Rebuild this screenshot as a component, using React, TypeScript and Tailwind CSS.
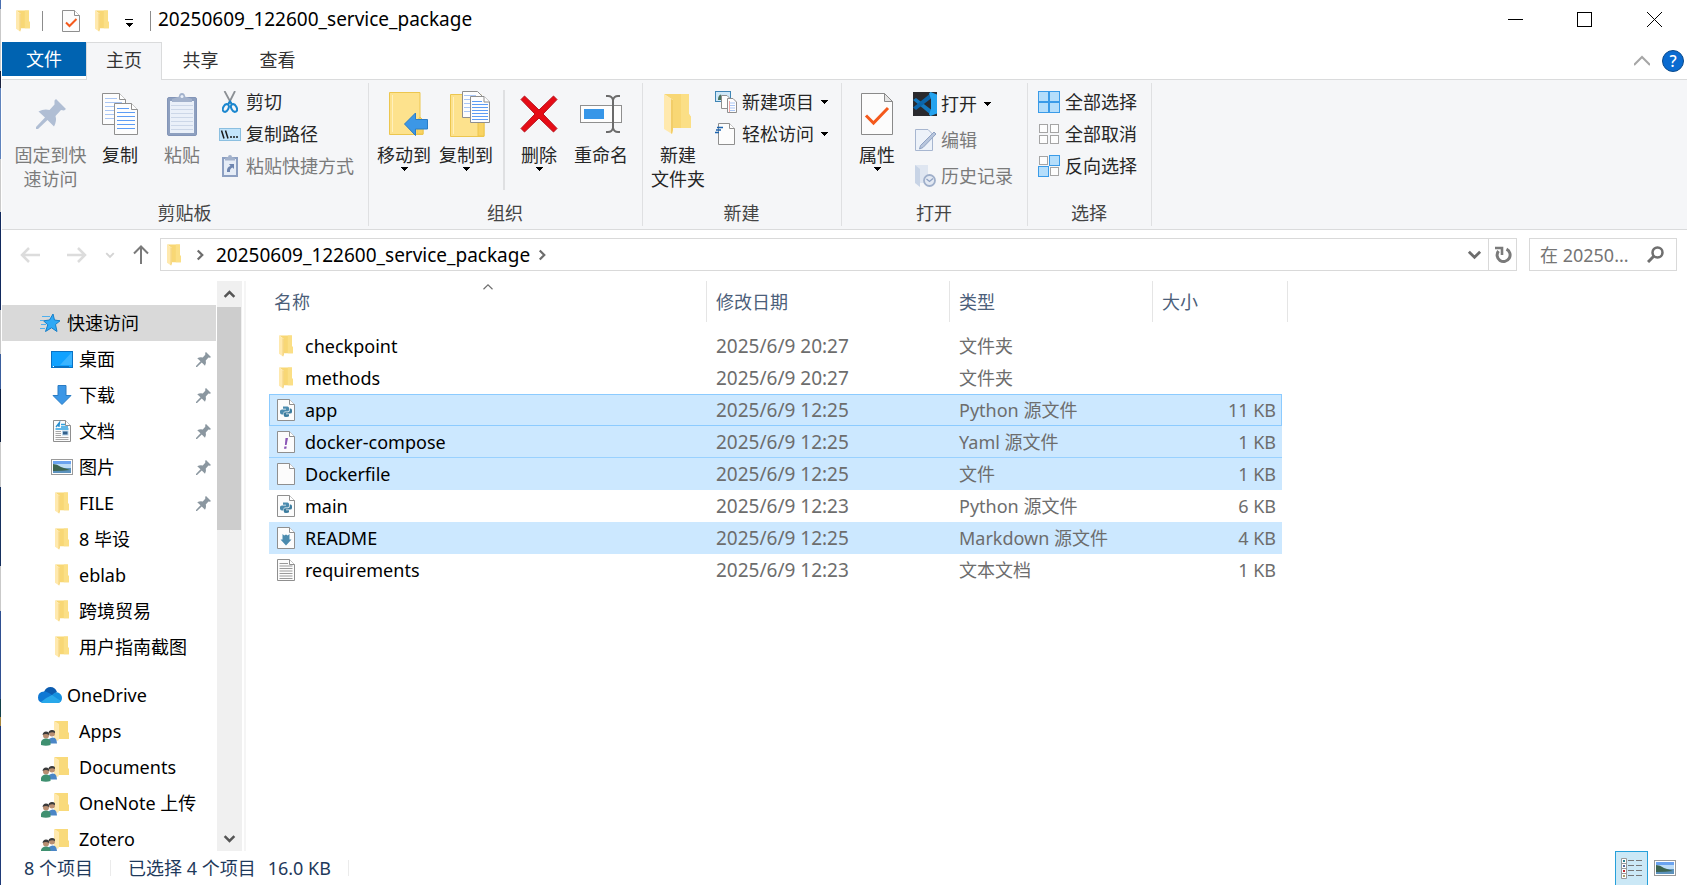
import { useState } from "react";
import type { ReactNode } from "react";

/* ---------- icons ---------- */

function Folder({ className = "h-[22px] w-[15px]" }: { className?: string }) {
  return (
    <svg viewBox="0 0 29 42" className={className} preserveAspectRatio="none" aria-hidden="true">
      <path d="M0 1H25V21L27 24V35H9V7Z" fill="#f8d775" />
      <path d="M17 1H25V21L27 24V35H17Z" fill="#fbdf86" />
      <path d="M0 1L9 7V37L8 41L0 36Z" fill="#ffe9ae" />
      <path d="M7 6L9 7V37L8 41L7 40Z" fill="#f2cd68" />
    </svg>
  );
}

function Page({ children }: { children?: ReactNode }) {
  return (
    <svg viewBox="0 0 18 22" className="h-[22px] w-[18px] shrink-0" aria-hidden="true">
      <path d="M.5 .5H12.500L17.500 5.500V21.500H.5Z" fill="#fcfcfc" stroke="#8f8f8f" />
      <path d="M12.500 .5V5.500H17.500" fill="#fff" stroke="#8f8f8f" />
      {children}
    </svg>
  );
}

function PythonIcon() {
  return (
    <Page>
      <path d="M6 7.500H10.500Q12 7.500 12 9V11Q12 12.500 10.500 12.500H8Q6.500 12.500 6.500 14V15.500H5Q3 15.500 3 13.500V12Q3 10.500 5 10.500H9V9.800H6Z" fill="#4b8bae" />
      <path d="M12.700 9.500H13.500Q15 9.500 15 11.500V13Q15 14.500 13 14.500H9V15.200H12V17Q12 18 9 18Q6.800 18 6.800 16.500V14.500Q6.800 13.200 8.300 13.200H11Q12.700 13.200 12.700 11.500Z" fill="#3c7c9e" />
    </Page>
  );
}

function YamlIcon() {
  return (
    <Page>
      <path d="M8.500 7H11L9.600 14H7.900Z" fill="#8a55b5" />
      <path d="M7.400 15.500H9.700L9.300 17.800H7Z" fill="#8a55b5" />
    </Page>
  );
}

function MarkdownIcon() {
  return (
    <Page>
      <path d="M5.500 7L7.200 8.500L9 7.500L10.800 8.500L12.500 7V12.500H14.500L9 18.500L3.500 12.500H5.500Z" fill="#4b8bae" />
    </Page>
  );
}

function TextIcon() {
  return (
    <Page>
      <path d="M2.500 4.500H11M2.500 7H15.500M2.500 9.500H15.500M2.500 12H15.500M2.500 14.500H15.500M2.500 17H15.500M2.500 19.500H15.500" stroke="#9a9a9a" />
    </Page>
  );
}

function DocIcon() {
  return (
    <Page>
      <path d="M3 7L6.500 2.500L6 7M4 5.500H6.500" fill="none" stroke="#2a8fd0" strokeWidth="1.300" />
      <path d="M8 4.500H12M8 7H15M2.500 9H15.500" stroke="#2ea0e0" strokeWidth="1.300" />
      <path d="M2.500 11.500H8M2.500 13.500H8M2.500 15.500H8M2.500 17.500H15.500M2.500 19.500H15.500" stroke="#a8a8a8" />
      <rect x="9.500" y="11" width="5.500" height="4" fill="#33618c" stroke="#b5d3ea" />
    </Page>
  );
}

function Picture() {
  return (
    <svg viewBox="0 0 22 16" className="h-4 w-[22px]" aria-hidden="true">
      <rect x=".5" y=".5" width="21" height="15" fill="#fff" stroke="#9a9a9a" />
      <rect x="2" y="2" width="18" height="4" fill="#6ba3f0" />
      <rect x="2" y="5" width="18" height="4" fill="#bcdcf7" />
      <rect x="2" y="9" width="18" height="5" fill="#5c92bd" />
      <path d="M2 5Q6 5 10 8L19 11Q12 12 2 12Z" fill="#3d6450" />
    </svg>
  );
}

function Desktop() {
  return (
    <svg viewBox="0 0 22 17" className="h-[17px] w-[22px]" aria-hidden="true">
      <rect x=".5" y=".5" width="21" height="16" fill="#11a2ff" stroke="#0a72c4" />
      <path d="M21 1V14H9Z" fill="#3bb4ff" />
      <path d="M2 15.500H19" stroke="#fff" strokeDasharray="1 2" />
      <path d="M3 15.500H18" stroke="#0a72c4" />
    </svg>
  );
}

function Download() {
  return (
    <svg viewBox="0 0 20 20" className="h-5 w-5" aria-hidden="true">
      <path d="M6 .5H14V10.500H19L10 19.500L1 10.500H6Z" fill="#3c97e6" stroke="#2a7cc4" />
    </svg>
  );
}

function Star() {
  return (
    <svg viewBox="0 0 22 20" className="h-5 w-[22px]" aria-hidden="true">
      <path d="M14 1L15.500 7L21 7.800L16.500 11.500L18 18.500L12.500 14.800L6.500 18.500L8.800 11.800L4.500 7.800L10.500 7Z" fill="#2fa9f5" stroke="#167fc9" />
      <path d="M3 3.500H11M1 7.500H4M2 11.500H7M1 15.500H6" stroke="#4fb0ee" />
    </svg>
  );
}

function Cloud() {
  return (
    <svg viewBox="0 0 24 16" className="h-4 w-6" aria-hidden="true">
      <path d="M6 5Q8 0 12.500 0Q17 0 19 5L12 10Z" fill="#0b5cb0" />
      <path d="M5 16Q0 15 0 10.500Q0 5 6 4.500Q9 4 14 8L9 16Z" fill="#0f78d4" />
      <path d="M14 8Q17 4.500 20 5.500Q24 7 24 11Q24 16 19 16H12Z" fill="#1590df" />
      <path d="M3 15Q7 11 14 8Q18 11 23 14Q21.500 16 19 16H5Q4 16 3 15Z" fill="#28a8ea" />
    </svg>
  );
}

function SharedFolder() {
  return (
    <svg viewBox="0 0 28 25" className="h-[25px] w-7" aria-hidden="true">
      <path d="M13 0H27V11L28 12V18H17V3Z" fill="#f9da7b" />
      <path d="M13 0L18 3V18L17 20L13 18Z" fill="#ffe9ae" />
      <circle cx="11" cy="12.500" r="3" fill="#b98f72" />
      <path d="M7.500 11.500Q8 9 11 9Q14.500 9 14 12Q11 10.500 7.500 12.500Z" fill="#3a3a3a" />
      <path d="M8 22.500V18Q11 15.500 14 17Q16 18.500 16 22.500Z" fill="#4b86c6" />
      <circle cx="5" cy="14.500" r="3" fill="#b98f72" />
      <path d="M1.500 14Q2 10.500 5 10.500Q8.500 10.500 8 14Q5 12 1.500 14Z" fill="#3a3a3a" />
      <path d="M0 24V21Q1 17.500 5 17.500Q9.500 17.500 9.500 21V24Q5 25.500 0 24Z" fill="#3f9070" />
    </svg>
  );
}

function Pin({ className, color }: { className: string; color: string }) {
  return (
    <svg viewBox="0 0 30 30" className={className} aria-hidden="true">
      <path d="M20 0L30 10L28 11.500L25 11L19.500 17Q21 22 18 27.500L11.500 21L2 30H0V28L9 18.500L2.500 12.500Q8 9.500 13.500 11L18.500 5.500L18.500 1.500Z" fill={color} />
    </svg>
  );
}

function Caret() {
  return (
    <svg viewBox="0 0 8 4" className="h-1 w-2 shrink-0" shapeRendering="crispEdges" aria-hidden="true">
      <path d="M0 0H8L4 4Z" fill="#000" />
    </svg>
  );
}

function CopyIcon() {
  return (
    <svg viewBox="0 0 36 42" className="h-[42px] w-9" aria-hidden="true">
      <path d="M.5 .5H17.500L23.500 6.500V31.500H.5Z" fill="#fdfdfd" stroke="#8f8f8f" />
      <path d="M17.500 .5V6.500H23.500" fill="#fff" stroke="#8f8f8f" />
      <path d="M3 5.500H15M3 9.500H20M3 13.500H20M3 17.500H20M3 21.500H20M3 25.500H20" stroke="#a9c6f5" />
      <path d="M12.500 10.500H29.500L35.500 16.500V41.500H12.500Z" fill="#fdfdfd" stroke="#8f8f8f" />
      <path d="M29.500 10.500V16.500H35.500" fill="#fff" stroke="#8f8f8f" />
      <path d="M15 15.500H27M15 19.500H33M15 23.500H33M15 27.500H33M15 31.500H33M15 35.500H33" stroke="#5c9cf5" />
    </svg>
  );
}

function PasteIcon() {
  return (
    <svg viewBox="0 0 30 43" className="h-[43px] w-[30px]" aria-hidden="true">
      <rect x=".5" y="4.500" width="29" height="38" rx="1.500" fill="#8ea0c0" stroke="#8395b8" />
      <rect x="3" y="8" width="24" height="32" fill="#eaf0f9" />
      <path d="M4 12.500H26M4 16.500H26M4 20.500H26M4 24.500H26M4 28.500H26M4 32.500H26M4 36.500H26" stroke="#ccd7e8" />
      <path d="M5 9V6L12 3.500Q12 0 15 0Q18 0 18 3.500L25 6V9Z" fill="#a3b2cc" />
      <circle cx="15" cy="3.500" r="1.500" fill="#eaf0f9" />
    </svg>
  );
}

function BigFolderBack() {
  return (
    <>
      <path d="M.5 .5H31V25L34 28V42.500H.5Z" fill="#fde28d" stroke="#ecc64f" />
      <path d="M28 42V29L31 25L34 28V42Z" fill="#f9d363" stroke="#ecc64f" />
      <path d="M3.500 3V40" stroke="#fff0bd" />
    </>
  );
}

function MoveToIcon() {
  return (
    <svg viewBox="-8 0 47 44" className="h-11 w-[47px]" aria-hidden="true">
      <BigFolderBack />
      <path d="M15.500 32L26.500 21V27.500H38.500V37H26.500V43.500Z" fill="#3c97e6" stroke="#2a7cc4" />
    </svg>
  );
}

function CopyToIcon() {
  return (
    <svg viewBox="-8 0 48 46" className="h-[46px] w-12" aria-hidden="true">
      <g transform="translate(0 3)">
        <BigFolderBack />
      </g>
      <path d="M12.500 .5H27.500L32 5V26.500H12.500Z" fill="#fdfdfd" stroke="#8f8f8f" />
      <path d="M14 4.500H26M14 8.500H29M14 12.500H29M14 16.500H29M14 20.500H29" stroke="#a9c6f5" />
      <path d="M20.500 5.500H34L39.500 11V31.500H20.500Z" fill="#fdfdfd" stroke="#8f8f8f" />
      <path d="M34 5.500V11H39.500" fill="#fff" stroke="#8f8f8f" />
      <path d="M22 10.500H32M22 13.500H38M22 16.500H38M22 19.500H38M22 22.500H38M22 25.500H38M22 28.500H38" stroke="#5c9cf5" />
    </svg>
  );
}

function DeleteIcon() {
  return (
    <svg viewBox="0 0 38 38" className="h-[38px] w-[38px]" aria-hidden="true">
      <path d="M4.500 1L19 15L33.500 1L37 4.500L23 19L37 33.500L33.500 37L19 23L4.500 37L1 33.500L15 19L1 4.500Z" fill="#e60c16" stroke="#b8111c" />
    </svg>
  );
}

function RenameIcon() {
  return (
    <svg viewBox="0 0 42 38" className="h-[38px] w-[42px]" aria-hidden="true">
      <rect x=".5" y="10.500" width="41" height="17" fill="#fdfdfd" stroke="#8f8f8f" />
      <rect x="4" y="14" width="20" height="10" fill="#3796e8" />
      <path d="M33 4V34M26 1H28Q32 1 33 5Q34 1 38 1H40M26 37H28Q32 37 33 33Q34 37 38 37H40" fill="none" stroke="#6b6b6b" strokeWidth="2" />
    </svg>
  );
}

function PropertiesIcon() {
  return (
    <svg viewBox="0 0 32 42" className="h-[42px] w-8" aria-hidden="true">
      <path d="M.5 .5H23.500L31.500 8.500V41.500H.5Z" fill="#fcfcfc" stroke="#8a8a8a" />
      <path d="M23.500 .5V8.500H31.500Z" fill="#e4e4e4" stroke="#8a8a8a" />
      <path d="M5 22.500L12.500 30L27 15" fill="none" stroke="#f4591c" strokeWidth="3" />
    </svg>
  );
}

function ScissorsIcon() {
  return (
    <svg viewBox="0 0 16 22" className="h-[22px] w-4" aria-hidden="true">
      <path d="M2.500 0L9.500 13M13 0L6.500 13" stroke="#8b8f94" strokeWidth="1.800" />
      <ellipse cx="3.800" cy="17" rx="2.600" ry="4" transform="rotate(28 3.800 17)" fill="none" stroke="#1b87cf" strokeWidth="2" />
      <ellipse cx="12" cy="17" rx="2.600" ry="4" transform="rotate(-28 12 17)" fill="none" stroke="#1b87cf" strokeWidth="2" />
      <path d="M5.500 14L8 10.500L10.500 14" fill="none" stroke="#1b87cf" strokeWidth="2" />
    </svg>
  );
}

function PathIcon() {
  return (
    <svg viewBox="0 0 22 13" className="h-[13px] w-[22px]" aria-hidden="true">
      <rect x=".5" y=".5" width="21" height="12" fill="#c3e4fa" stroke="#8bbfe0" />
      <path d="M2.500 2.500L5 10.500M6.500 2.500L9 10.500" stroke="#1c1c1c" strokeWidth="1.500" />
      <path d="M11 9H13M14 9H16M17 9H19" stroke="#1c1c1c" strokeWidth="1.600" />
    </svg>
  );
}

function PasteLinkIcon() {
  return (
    <svg viewBox="0 0 16 22" className="h-[22px] w-4" aria-hidden="true">
      <rect x="1" y="3" width="14" height="18" fill="#e6edf7" stroke="#8da0c2" strokeWidth="2" />
      <path d="M3 5.500V3L6 2Q6 0 8 0Q10 0 10 2L13 3V5.500Z" fill="#a3b2cc" />
      <path d="M5 17Q4.500 12 8.500 11L7 9H12V14L10.500 12.500Q7.500 13.500 8 17Z" fill="#6f86b0" />
    </svg>
  );
}

function NewItemIcon() {
  return (
    <svg viewBox="0 0 22 22" className="h-[22px] w-[22px]" aria-hidden="true">
      <rect x=".5" y=".5" width="15" height="10" fill="#cfe8f8" stroke="#3f85b5" />
      <path d="M3 9Q3 4 6 3.500Q7 6 6 9Z" fill="#48745f" />
      <path d="M6.500 4.500H12L15.500 8V17.500H6.500Z" fill="#fdfdfd" stroke="#8f8f8f" />
      <path d="M12.500 7.500H18L21.500 11V21.500H12.500Z" fill="#fdfdfd" stroke="#8f8f8f" />
      <path d="M14 12H20M14 14.500H20M14 17H20M14 19.500H20" stroke="#a9c6f5" />
      <path d="M14.500 10V21" stroke="#f0a6a6" />
    </svg>
  );
}

function EasyAccessIcon() {
  return (
    <svg viewBox="0 0 22 22" className="h-[22px] w-[22px]" aria-hidden="true">
      <path d="M3.500 .5H14.500L19.500 5.500V21.500H3.500Z" fill="#fcfcfc" stroke="#8f8f8f" />
      <path d="M14.500 .5V5.500H19.500" fill="#fff" stroke="#8f8f8f" />
      <path d="M2 4.500H8M1 7H6M0 9.500H4" stroke="#1c63ad" strokeWidth="1.300" />
    </svg>
  );
}

function VsCodeIcon() {
  return (
    <svg viewBox="0 0 24 24" className="h-6 w-6 shrink-0" aria-hidden="true">
      <rect width="24" height="24" fill="#2a2a2e" />
      <path d="M0 8L3 6L18 17.500V23Z" fill="#1379c0" />
      <path d="M0 15.500L3 18L18 6.500V1Z" fill="#0b66ac" />
      <path d="M17.500 0L24 2.500V21.500L17.500 24L16 22.500L18 17V7L16 1.500Z" fill="#25a3ee" />
    </svg>
  );
}

function EditIcon() {
  return (
    <svg viewBox="0 0 21 22" className="h-[22px] w-[21px]" aria-hidden="true">
      <path d="M.5 .5H13L17.500 5V21.500H.5Z" fill="#edf2f9" stroke="#a7b6d0" />
      <path d="M19 3L21 5L8 18.500L4.500 20L5.500 16.500Z" fill="#b7c5dc" stroke="#8fa2c3" />
    </svg>
  );
}

function HistoryIcon() {
  return (
    <svg viewBox="0 0 21 22" className="h-[22px] w-[21px]" aria-hidden="true">
      <path d="M0 0H13V18H4Z" fill="#dfe6f1" />
      <path d="M0 0L5 4V22L0 18Z" fill="#c8d4e6" />
      <circle cx="14.500" cy="15.500" r="5.500" fill="#e3e9f3" stroke="#9fafca" strokeWidth="1.800" />
      <path d="M11.500 14L14.500 16.500L18 13.500" fill="none" stroke="#8fa2c3" strokeWidth="1.300" />
    </svg>
  );
}

const squares = [
  [0, 0],
  [11, 0],
  [0, 11],
  [11, 11],
];

function SelectIcon({ on }: { on: boolean[] }) {
  return (
    <svg viewBox="0 0 22 22" className="h-[22px] w-[22px]" aria-hidden="true">
      {squares.map(([x, y], i) =>
        on[i] ? (
          <rect key={i} x={x + 0.5} y={y + 0.5} width="10" height="10" fill="#b5defb" stroke="#3a9be8" />
        ) : (
          <rect key={i} x={x + 1.5} y={y + 1.5} width="8" height="8" fill="#fdfdfd" stroke="#a5a5a5" />
        )
      )}
    </svg>
  );
}

function Chevron({ d, className, color = "#6d6d6d", width = 3 }: { d: string; className: string; color?: string; width?: number }) {
  return (
    <svg viewBox="0 0 16 16" className={className} aria-hidden="true">
      <path d={d} fill="none" stroke={color} strokeWidth={width} />
    </svg>
  );
}

const chevronUp = "M2 11L8 5L14 11";
const chevronDown = "M2 5L8 11L14 5";
const chevronRight = "M5 2L11 8L5 14";

/* ---------- ribbon ---------- */

function Group({ title, children }: { title: string; children: ReactNode }) {
  return (
    <section className="my-[3px] flex flex-col justify-between border-r border-[#dfe0e2] pr-px">
      <div className="flex items-start pt-[3px]">{children}</div>
      <h2 className="pb-px text-center text-[#444]">{title}</h2>
    </section>
  );
}

function BigButton({ icon, lines, menu, disabled, wide }: { icon: ReactNode; lines: string[]; menu?: boolean; disabled?: boolean; wide?: boolean }) {
  return (
    <button
      type="button"
      disabled={disabled}
      className={`flex flex-col items-center pt-1.5 disabled:text-[#7b7b7b] ${wide ? "w-[77px]" : "w-[62px]"}`}
    >
      <span className="mb-[7px] flex h-11 items-center">{icon}</span>
      {lines.map((line) => (
        <span key={line} className="whitespace-nowrap">
          {line}
        </span>
      ))}
      {menu && <Caret />}
    </button>
  );
}

function SmallButton({ icon, label, menu, disabled, tall }: { icon: ReactNode; label: string; menu?: boolean; disabled?: boolean; tall?: boolean }) {
  return (
    <button
      type="button"
      disabled={disabled}
      className={`flex items-center whitespace-nowrap disabled:text-[#7b7b7b] ${tall ? "h-9" : "h-8"}`}
    >
      <span className="mr-[5px] flex w-[22px] justify-center">{icon}</span>
      <span className="mr-1.5">{label}</span>
      {menu && <Caret />}
    </button>
  );
}

function Ribbon() {
  return (
    <div className="flex h-[150px] shrink-0 border-b border-[#dadbdc] bg-[#f5f6f8] text-[#262626]">
      <Group title="剪贴板">
        <div className="flex pl-2.5">
          <BigButton icon={<Pin className="h-[30px] w-[30px]" color="#b0bed4" />} lines={["固定到快", "速访问"]} disabled wide />
          <BigButton icon={<CopyIcon />} lines={["复制"]} />
          <BigButton icon={<PasteIcon />} lines={["粘贴"]} disabled />
        </div>
        <div className="flex flex-col pr-[7px] pl-1.5">
          <SmallButton icon={<ScissorsIcon />} label="剪切" />
          <SmallButton icon={<PathIcon />} label="复制路径" />
          <SmallButton icon={<PasteLinkIcon />} label="粘贴快捷方式" disabled />
        </div>
      </Group>
      <Group title="组织">
        <div className="flex pr-[9px] pl-1">
          <BigButton icon={<MoveToIcon />} lines={["移动到"]} menu />
          <BigButton icon={<CopyToIcon />} lines={["复制到"]} menu />
          <div className="mt-1 mr-[3px] ml-1.5 h-[100px] w-0.5 bg-[#dfe0e2]" />
          <BigButton icon={<DeleteIcon />} lines={["删除"]} menu />
          <BigButton icon={<RenameIcon />} lines={["重命名"]} />
        </div>
      </Group>
      <Group title="新建">
        <div className="flex pl-1">
          <BigButton icon={<Folder className="h-[42px] w-[29px]" />} lines={["新建", "文件夹"]} />
        </div>
        <div className="flex flex-col pr-3 pl-1.5">
          <SmallButton icon={<NewItemIcon />} label="新建项目" menu />
          <SmallButton icon={<EasyAccessIcon />} label="轻松访问" menu />
        </div>
      </Group>
      <Group title="打开">
        <div className="flex pl-1">
          <BigButton icon={<PropertiesIcon />} lines={["属性"]} menu />
        </div>
        <div className="flex flex-col pr-[7px] pl-1.5">
          <SmallButton icon={<VsCodeIcon />} label="打开" menu tall />
          <SmallButton icon={<EditIcon />} label="编辑" disabled tall />
          <SmallButton icon={<HistoryIcon />} label="历史记录" disabled tall />
        </div>
      </Group>
      <Group title="选择">
        <div className="flex flex-col pr-[7px] pl-2.5">
          <SmallButton icon={<SelectIcon on={[true, true, true, true]} />} label="全部选择" />
          <SmallButton icon={<SelectIcon on={[false, false, false, false]} />} label="全部取消" />
          <SmallButton icon={<SelectIcon on={[false, true, true, false]} />} label="反向选择" />
        </div>
      </Group>
    </div>
  );
}

/* ---------- window chrome ---------- */

function TitleBar() {
  return (
    <header className="flex h-[42px] shrink-0 items-center justify-between">
      <div className="flex h-full items-center pl-3.5">
        <Folder />
        <span className="ml-[11px] h-5 w-px bg-[#8c8c8c]" />
        <button type="button" aria-label="属性" className="ml-[19px]">
          <Page>
            <path d="M4 12.500L7.500 16L14.500 9" fill="none" stroke="#f4591c" strokeWidth="2" />
          </Page>
        </button>
        <button type="button" aria-label="新建文件夹" className="ml-[15px]">
          <Folder />
        </button>
        <button type="button" aria-label="自定义快速访问工具栏" className="ml-3.5">
          <svg viewBox="0 0 10 8" className="mt-1 h-2 w-2.5" shapeRendering="crispEdges" aria-hidden="true">
            <path d="M1 0H9V1H1ZM1 4H9L5 8Z" fill="#000" />
          </svg>
        </button>
        <span className="ml-4 h-5 w-px bg-[#8c8c8c]" />
        <h1 className="ml-[7px] pb-1 text-[19px] text-black">20250609_122600_service_package</h1>
      </div>
      <div className="flex h-full pb-1">
        <button type="button" aria-label="最小化" className="flex w-16 items-center justify-center">
          <svg viewBox="0 0 15 15" className="h-[15px] w-[15px]" aria-hidden="true">
            <path d="M0 7.500H15" stroke="#000" />
          </svg>
        </button>
        <button type="button" aria-label="最大化" className="flex w-[75px] items-center justify-center">
          <svg viewBox="0 0 15 15" className="h-[15px] w-[15px]" aria-hidden="true">
            <rect x=".5" y=".5" width="14" height="14" fill="none" stroke="#000" />
          </svg>
        </button>
        <button type="button" aria-label="关闭" className="flex w-[65px] items-center justify-center">
          <svg viewBox="0 0 15 15" className="h-[15px] w-[15px]" aria-hidden="true">
            <path d="M0 0L15 15M15 0L0 15" stroke="#000" />
          </svg>
        </button>
      </div>
    </header>
  );
}

function Tabs() {
  return (
    <nav className="flex h-[38px] shrink-0 items-start justify-between border-b border-[#dadbdc] text-[#333]">
      <div className="flex h-full">
        <button type="button" className="h-[34px] w-[84px] bg-[#0063b1] text-white">
          文件
        </button>
        <button type="button" className="-mb-px w-[76px] border border-b-0 border-[#dadbdc] bg-[#f5f6f8] pb-1">
          主页
        </button>
        <button type="button" className="w-[77px] pb-px">
          共享
        </button>
        <button type="button" className="w-[77px] pb-px">
          查看
        </button>
      </div>
      <div className="flex h-full items-center gap-3 pr-[3px]">
        <button type="button" aria-label="最小化功能区">
          <Chevron d="M0 12L8 4L16 12" className="h-4 w-4" color="#a6a6a6" width={2} />
        </button>
        <button type="button" aria-label="帮助" className="flex h-[22px] w-[22px] items-center justify-center rounded-full border border-[#0a4a8c] bg-[#0a6bd0] text-base leading-5 font-medium text-white">
          ?
        </button>
      </div>
    </nav>
  );
}

function AddressBar() {
  const [query, setQuery] = useState("");

  return (
    <div className="flex h-[51px] shrink-0 items-start pt-2 pr-2.5">
      <div className="flex h-[33px] w-[158px] shrink-0 items-center pl-[18px]">
        <button type="button" aria-label="后退" disabled>
          <svg viewBox="0 0 20 18" className="h-[18px] w-5" aria-hidden="true">
            <path d="M9 2L2 9L9 16M2 9H20" fill="none" stroke="#dcdcdc" strokeWidth="2.500" />
          </svg>
        </button>
        <button type="button" aria-label="前进" disabled className="ml-[27px]">
          <svg viewBox="0 0 20 18" className="h-[18px] w-5" aria-hidden="true">
            <path d="M11 2L18 9L11 16M0 9H18" fill="none" stroke="#dcdcdc" strokeWidth="2.500" />
          </svg>
        </button>
        <button type="button" aria-label="最近浏览的位置" className="ml-[18px]">
          <Chevron d={chevronDown} className="h-2.5 w-2.5" color="#d4d4d4" />
        </button>
        <button type="button" aria-label="上移" className="ml-[18px]">
          <svg viewBox="0 0 16 19" className="h-[19px] w-4" aria-hidden="true">
            <path d="M1 8.500L8 1.500L15 8.500M8 2V19" fill="none" stroke="#7a7a7a" strokeWidth="2" />
          </svg>
        </button>
      </div>
      <div className="flex h-[33px] min-w-0 flex-1 items-center border border-[#d9d9d9]">
        <span className="ml-1.5">
          <Folder />
        </span>
        <Chevron d={chevronRight} className="ml-3 h-3 w-3" />
        <a href="#package" className="ml-2.5 text-[19px] text-black">
          20250609_122600_service_package
        </a>
        <Chevron d={chevronRight} className="ml-1.5 h-3 w-3" />
        <button type="button" aria-label="以前的位置" className="ml-auto flex w-[27px] justify-center">
          <Chevron d={chevronDown} className="h-[15px] w-[15px]" />
        </button>
        <button type="button" aria-label="刷新" className="flex h-full w-7 items-center justify-center border-l border-[#d9d9d9]">
          <svg viewBox="0 0 18 18" className="h-[18px] w-[18px]" aria-hidden="true">
            <path d="M12.500 3.200A6.500 6.500 0 1 1 4.500 5" fill="none" stroke="#7a7a7a" strokeWidth="3" />
            <path d="M1 2H8V9" fill="none" stroke="#7a7a7a" strokeWidth="2.600" />
          </svg>
        </button>
      </div>
      <div className="ml-3 flex h-[33px] w-[148px] items-center border border-[#d9d9d9] pr-3 pl-2.5">
        <input
          type="text"
          aria-label="搜索"
          placeholder="在 20250..."
          value={query}
          onChange={(e) => setQuery(e.target.value)}
          className="w-full min-w-0 outline-none placeholder:text-[#757575]"
        />
        <svg viewBox="0 0 17 17" className="h-[17px] w-[17px] shrink-0" aria-hidden="true">
          <circle cx="10.500" cy="6.500" r="5" fill="none" stroke="#6f6f6f" strokeWidth="2.500" />
          <path d="M7 10L1 16" stroke="#6f6f6f" strokeWidth="3" />
        </svg>
      </div>
    </div>
  );
}

/* ---------- sidebar ---------- */

const quickAccess = [
  { name: "桌面", icon: <Desktop />, pinned: true },
  { name: "下载", icon: <Download />, pinned: true },
  { name: "文档", icon: <DocIcon />, pinned: true },
  { name: "图片", icon: <Picture />, pinned: true },
  { name: "FILE", icon: <Folder />, pinned: true },
  { name: "8 毕设", icon: <Folder />, pinned: false },
  { name: "eblab", icon: <Folder />, pinned: false },
  { name: "跨境贸易", icon: <Folder />, pinned: false },
  { name: "用户指南截图", icon: <Folder />, pinned: false },
];

const oneDrive = ["Apps", "Documents", "OneNote 上传", "Zotero"];

function Sidebar() {
  return (
    <aside className="flex w-[244px] shrink-0 border-r-2 border-[#f5f5f5]">
      <nav className="min-w-0 flex-1 overflow-hidden pt-6 text-black">
        <a href="#quick" className="mr-px flex h-9 items-center bg-[#d9d9d9] pl-[37px]">
          <Star />
          <span className="ml-1.5">快速访问</span>
        </a>
        {quickAccess.map((item) => (
          <a key={item.name} href={`#${item.name}`} className="flex h-9 items-center pr-1.5 pl-12">
            <span className="flex w-6 justify-center">{item.icon}</span>
            <span className="ml-[5px] whitespace-nowrap">{item.name}</span>
            {item.pinned && (
              <span className="ml-auto">
                <Pin className="h-[15px] w-[15px]" color="#8b97a0" />
              </span>
            )}
          </a>
        ))}
        <a href="#onedrive" className="mt-3 flex h-9 items-center pl-9">
          <Cloud />
          <span className="ml-[5px]">OneDrive</span>
        </a>
        {oneDrive.map((name) => (
          <a key={name} href={`#${name}`} className="flex h-9 items-center pl-[39px]">
            <span className="pt-1">
              <SharedFolder />
            </span>
            <span className="ml-2.5 whitespace-nowrap">{name}</span>
          </a>
        ))}
      </nav>
      <div className="mr-0.5 flex w-[25px] flex-col bg-[#f0f0f0]">
        <button type="button" aria-label="向上滚动" className="flex h-[26px] items-center justify-center">
          <Chevron d={chevronUp} className="h-[13px] w-[13px]" color="#555" />
        </button>
        <div className="flex-1">
          <div className="mr-px h-[43%] bg-[#cdcdcd]" />
        </div>
        <button type="button" aria-label="向下滚动" className="flex h-[26px] items-center justify-center">
          <Chevron d={chevronDown} className="h-[13px] w-[13px]" color="#555" />
        </button>
      </div>
    </aside>
  );
}

/* ---------- file list ---------- */

const files = [
  { name: "checkpoint", date: "2025/6/9 20:27", type: "文件夹", size: "", icon: <Folder />, style: "" },
  { name: "methods", date: "2025/6/9 20:27", type: "文件夹", size: "", icon: <Folder />, style: "" },
  { name: "app", date: "2025/6/9 12:25", type: "Python 源文件", size: "11 KB", icon: <PythonIcon />, style: "bg-[#cce8ff] outline outline-[#8ccbff] -outline-offset-1" },
  { name: "docker-compose", date: "2025/6/9 12:25", type: "Yaml 源文件", size: "1 KB", icon: <YamlIcon />, style: "bg-[#cce8ff] shadow-[inset_0_-1px_#99d1ff]" },
  { name: "Dockerfile", date: "2025/6/9 12:25", type: "文件", size: "1 KB", icon: <Page />, style: "bg-[#cce8ff]" },
  { name: "main", date: "2025/6/9 12:23", type: "Python 源文件", size: "6 KB", icon: <PythonIcon />, style: "" },
  { name: "README", date: "2025/6/9 12:25", type: "Markdown 源文件", size: "4 KB", icon: <MarkdownIcon />, style: "bg-[#cce8ff]" },
  { name: "requirements", date: "2025/6/9 12:23", type: "文本文档", size: "1 KB", icon: <TextIcon />, style: "" },
];

function FileList() {
  return (
    <main className="min-w-0 flex-1 overflow-hidden pl-[23px]">
      <table className="w-[1013px] table-fixed border-collapse text-left">
        <thead className="text-[#4c607a]">
          <tr className="h-[41px]">
            <th className="relative w-[437px] p-0 pl-[5px] font-normal">
              名称
              <Chevron d={chevronUp} className="absolute top-0 left-1/2 h-3 w-3 -translate-x-1/2" color="#6d6d6d" width={1.5} />
            </th>
            <th className="w-[243px] p-0 font-normal">
              <div className="flex h-[41px] items-center border-l border-[#e5e5e5] pl-[9px]">修改日期</div>
            </th>
            <th className="w-[203px] p-0 font-normal">
              <div className="flex h-[41px] items-center border-l border-[#e5e5e5] pl-[9px]">类型</div>
            </th>
            <th className="p-0 font-normal">
              <div className="-mr-1.5 flex h-[41px] items-center border-x border-[#e5e5e5] pl-[9px]">大小</div>
            </th>
          </tr>
          <tr className="h-2" />
        </thead>
        <tbody className="text-[#6d6d6d]">
          {files.map((file) => (
            <tr key={file.name} className={`h-8 ${file.style}`}>
              <td className="p-0 text-black">
                <div className="flex items-center pl-2">
                  <span className="flex w-[18px] justify-center">{file.icon}</span>
                  <span className="ml-2.5">{file.name}</span>
                </div>
              </td>
              <td className="p-0 pl-2.5 text-[19px]">{file.date}</td>
              <td className="p-0 pl-2.5">{file.type}</td>
              <td className="p-0 pr-1.5 text-right">{file.size}</td>
            </tr>
          ))}
        </tbody>
      </table>
    </main>
  );
}

function StatusBar() {
  return (
    <footer className="flex h-[34px] shrink-0 items-center pl-[22px] text-[#1e395b]">
      <span>8 个项目</span>
      <span className="mx-[17px] h-4 w-px bg-[#ebebeb]" />
      <span>已选择 4 个项目</span>
      <span className="ml-3">16.0 KB</span>
      <span className="ml-[17px] h-4 w-px bg-[#ebebeb]" />
      <div className="ml-auto flex h-full items-center pr-[11px]">
        <button type="button" aria-label="详细信息" className="mr-1.5 flex h-full w-[33px] items-center justify-center border border-b-0 border-[#26a0da] bg-[#cbe8f6]">
          <svg viewBox="0 0 21 21" className="h-[21px] w-[21px]" aria-hidden="true">
            <path d="M.5 .5H5.500V20.500H.5ZM.5 5.500H5.500M.5 10.500H5.500M.5 15.500H5.500" fill="#fff" stroke="#999" />
            <path d="M2 3H4" stroke="#2a7f8c" strokeWidth="2" />
            <path d="M2 8H4" stroke="#556b9a" strokeWidth="2" />
            <path d="M2 13H4" stroke="#c1272d" strokeWidth="2" />
            <path d="M2 18H4" stroke="#a8a16a" strokeWidth="2" />
            <path d="M7 2.500H13M15 2.500H21M7 7.500H13M15 7.500H21M7 12.500H13M15 12.500H21M7 17.500H13M15 17.500H21" stroke="#777" />
          </svg>
        </button>
        <button type="button" aria-label="大缩略图">
          <Picture />
        </button>
      </div>
    </footer>
  );
}

export default function App() {
  return (
    <div className="flex h-screen overflow-hidden bg-white font-['Noto_Sans','Noto_Sans_CJK_SC',sans-serif] text-lg leading-6">
      {/* sliver of the desktop behind the window */}
      <div className="mr-px w-px shrink-0 bg-[linear-gradient(to_bottom,#4a6fb0_0_1%,#c9c9c9_1%_8%,#1b2340_8%_10%,#5f83bd_10%_18%,#c9c9c9_18%_24%,#122a5e_24%_35%,#c9c9c9_35%_40%,#3a5d9c_40%_44%,#0b1c3e_44%_50%,#c9c9c9_50%_55%,#16305f_55%_64%,#c9c9c9_64%_69%,#2f4f91_69%_79%,#12404a_79%_81%,#a8873c_81%_82%,#1f3a78_82%_100%)]" />
      <div className="flex min-w-0 flex-1 flex-col">
        <TitleBar />
        <Tabs />
        <Ribbon />
        <AddressBar />
        <div className="flex min-h-0 flex-1">
          <Sidebar />
          <FileList />
        </div>
        <StatusBar />
      </div>
    </div>
  );
}
